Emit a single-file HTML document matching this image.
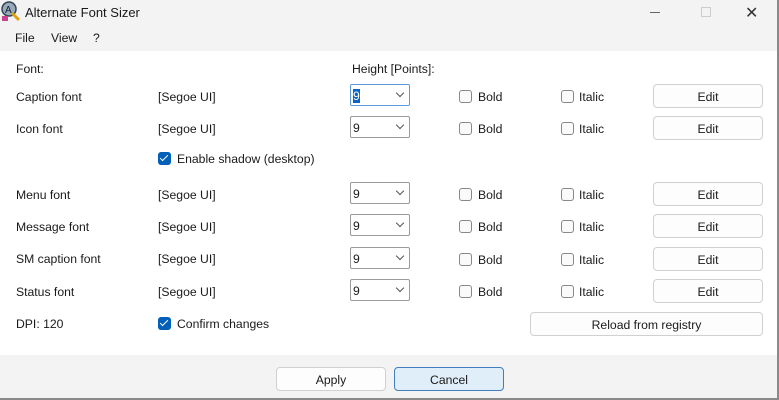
<!DOCTYPE html><html><head><style>
*{box-sizing:border-box;margin:0;padding:0}
body{width:779px;height:400px;overflow:hidden;font-family:"Liberation Sans",sans-serif;font-size:12.2px;color:#1a1a1a;background:#f3f3f3;position:relative}
.a{position:absolute;white-space:nowrap}
.content{position:absolute;left:0;top:51px;width:777px;height:304px;background:#fff}
.combo{position:absolute;width:60px;height:22px;border:1px solid #9a9a9a;border-radius:2px;background:#fff;padding:4px 0 0 2px}
.combo:after{content:"";position:absolute;right:6px;top:5px;width:5px;height:5px;border-right:1px solid #555;border-bottom:1px solid #555;transform:rotate(45deg)}
.cb{position:absolute;width:13px;height:13px;border:1px solid #888;border-radius:3px;background:#fafafa}
.cbc{position:absolute;width:13px;height:13px;border-radius:3px;background:#005fb8}
.cbc:after{content:"";position:absolute;left:4px;top:1px;width:3px;height:7px;border-right:1.6px solid #fff;border-bottom:1.6px solid #fff;transform:rotate(45deg)}
.btn{position:absolute;border:1px solid #d0d0d0;border-radius:4px;background:#fdfdfd;text-align:center;line-height:24px}
</style></head><body>
<div class="a" style="left:0;top:0;width:22px;height:24px"><svg width="22" height="24"><circle cx="9" cy="9" r="7" fill="#9ab" stroke="#345" stroke-width="1.5"/><text x="5" y="13" font-size="10" fill="#123" font-family="Liberation Sans">A</text><path d="M12 13 L19 20" stroke="#e0a010" stroke-width="3"/><rect x="2" y="16" width="6" height="5" fill="#d04090"/></svg></div>
<div class="a" style="left:25px;top:5px;font-size:13px">Alternate Font Sizer</div>
<div class="a" style="left:650px;top:12px;width:10px;border-top:1px solid #666"></div>
<div class="a" style="left:701px;top:7px;width:10px;height:10px;border:1px solid #ccc"></div>
<div class="a" style="left:745px;top:3px;font-size:16px;color:#333">✕</div>
<div class="a" style="left:15px;top:31px">File</div>
<div class="a" style="left:51px;top:31px">View</div>
<div class="a" style="left:93px;top:31px">?</div>
<div class="content"></div>
<div class="a" style="left:777px;top:0;width:2px;height:400px;background:#8a8a8a"></div>
<div class="a" style="left:16px;top:62px">Font:</div>
<div class="a" style="left:352px;top:62px">Height [Points]:</div>

<div class="a" style="left:16px;top:90px">Caption font</div><div class="a" style="left:158px;top:90px">[Segoe UI]</div>
<div class="combo" style="left:350px;top:84px;border:1.5px solid #5a9ad8"><span style="background:#0a64c8;color:#fff">9</span></div>
<div class="cb" style="left:459px;top:90px"></div><div class="a" style="left:478px;top:90px">Bold</div>
<div class="cb" style="left:561px;top:90px"></div><div class="a" style="left:579px;top:90px">Italic</div>
<div class="btn" style="left:653px;top:84px;width:110px;height:24px">Edit</div>

<div class="a" style="left:16px;top:122px">Icon font</div><div class="a" style="left:158px;top:122px">[Segoe UI]</div>
<div class="combo" style="left:350px;top:116px">9</div>
<div class="cb" style="left:459px;top:122px"></div><div class="a" style="left:478px;top:122px">Bold</div>
<div class="cb" style="left:561px;top:122px"></div><div class="a" style="left:579px;top:122px">Italic</div>
<div class="btn" style="left:653px;top:116px;width:110px;height:24px">Edit</div>

<div class="cbc" style="left:158px;top:152px"></div><div class="a" style="left:177px;top:152px">Enable shadow (desktop)</div>

<div class="a" style="left:16px;top:188px">Menu font</div><div class="a" style="left:158px;top:188px">[Segoe UI]</div>
<div class="combo" style="left:350px;top:182px">9</div>
<div class="cb" style="left:459px;top:188px"></div><div class="a" style="left:478px;top:188px">Bold</div>
<div class="cb" style="left:561px;top:188px"></div><div class="a" style="left:579px;top:188px">Italic</div>
<div class="btn" style="left:653px;top:182px;width:110px;height:24px">Edit</div>

<div class="a" style="left:16px;top:220px">Message font</div><div class="a" style="left:158px;top:220px">[Segoe UI]</div>
<div class="combo" style="left:350px;top:214px">9</div>
<div class="cb" style="left:459px;top:220px"></div><div class="a" style="left:478px;top:220px">Bold</div>
<div class="cb" style="left:561px;top:220px"></div><div class="a" style="left:579px;top:220px">Italic</div>
<div class="btn" style="left:653px;top:214px;width:110px;height:24px">Edit</div>

<div class="a" style="left:16px;top:252px">SM caption font</div><div class="a" style="left:158px;top:252px">[Segoe UI]</div>
<div class="combo" style="left:350px;top:247px">9</div>
<div class="cb" style="left:459px;top:253px"></div><div class="a" style="left:478px;top:253px">Bold</div>
<div class="cb" style="left:561px;top:253px"></div><div class="a" style="left:579px;top:253px">Italic</div>
<div class="btn" style="left:653px;top:247px;width:110px;height:24px">Edit</div>

<div class="a" style="left:16px;top:285px">Status font</div><div class="a" style="left:158px;top:285px">[Segoe UI]</div>
<div class="combo" style="left:350px;top:279px">9</div>
<div class="cb" style="left:459px;top:285px"></div><div class="a" style="left:478px;top:285px">Bold</div>
<div class="cb" style="left:561px;top:285px"></div><div class="a" style="left:579px;top:285px">Italic</div>
<div class="btn" style="left:653px;top:279px;width:110px;height:24px">Edit</div>

<div class="a" style="left:16px;top:317px">DPI: 120</div>
<div class="cbc" style="left:158px;top:317px"></div><div class="a" style="left:177px;top:317px">Confirm changes</div>
<div class="btn" style="left:530px;top:312px;width:233px;height:24px">Reload from registry</div>

<div class="btn" style="left:276px;top:367px;width:110px;height:24px">Apply</div>
<div class="btn" style="left:394px;top:367px;width:110px;height:24px;background:#e0eef9;border-color:#3f7fbf">Cancel</div>
<div class="a" style="left:0;top:398px;width:779px;height:2px;background:#8a8a8a"></div>
</body></html>
